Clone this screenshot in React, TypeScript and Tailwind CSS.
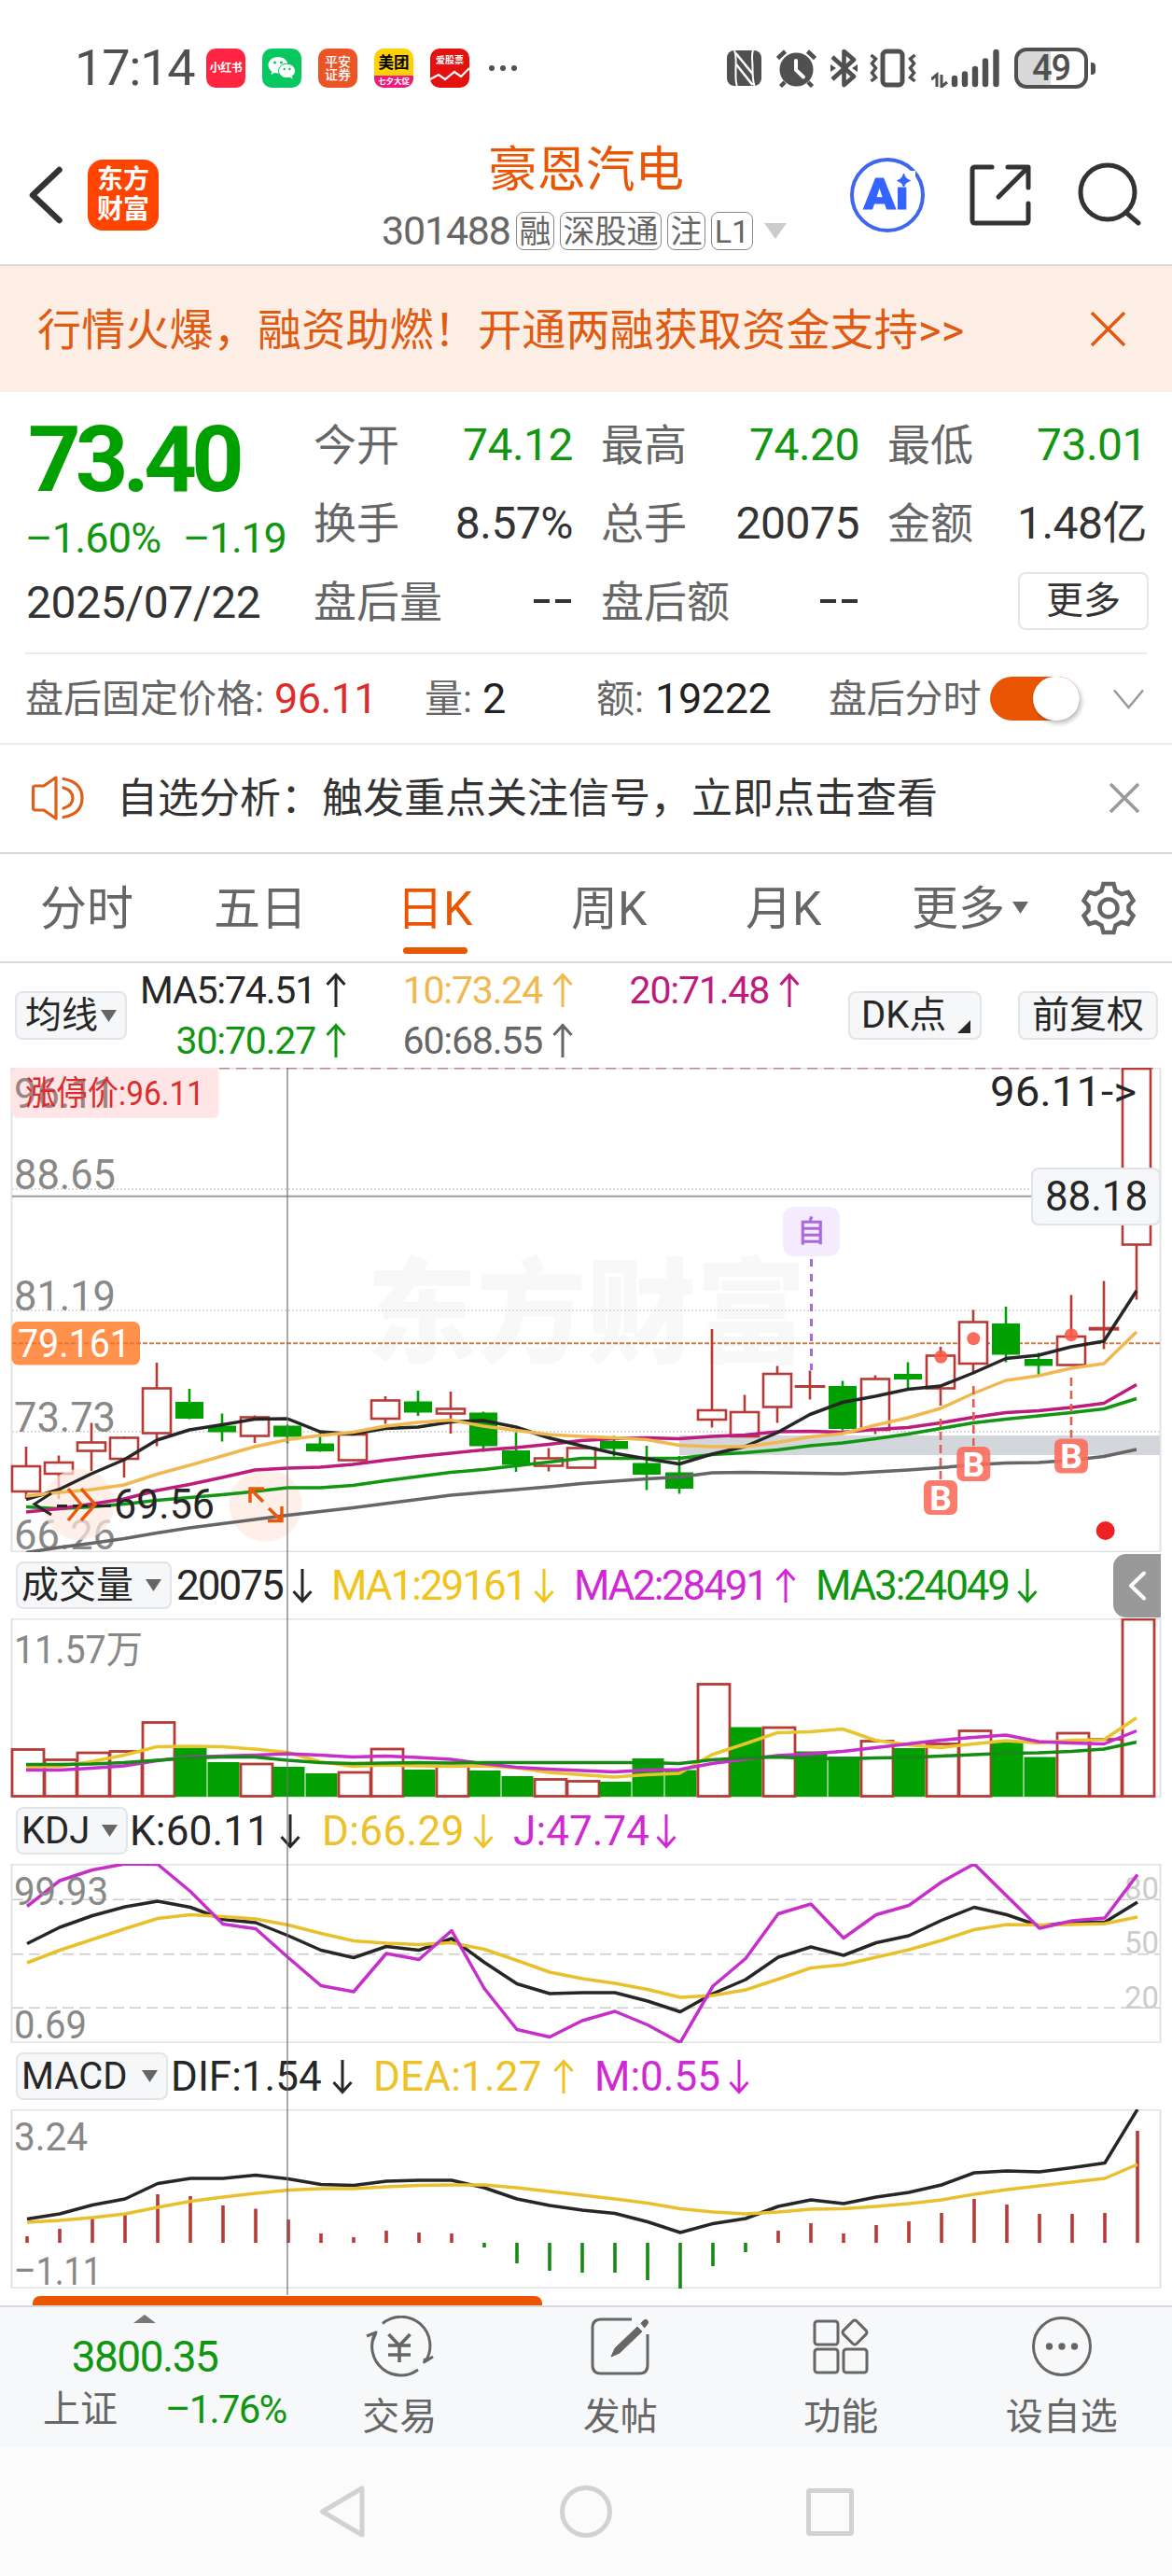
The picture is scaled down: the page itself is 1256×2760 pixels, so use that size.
import type { ReactNode } from "react";

const RED = "#b73a36";
const GREEN = "#00a000";
const STEP = 35;
const FIRST_X = 28;

type Candle = [up: boolean, high: number, top: number, bottom: number, low: number];

const CANDLES: Candle[] = [
  [true, 406, 427, 454, 462],
  [true, 415.5, 423, 435, 462],
  [true, 380.5, 401.5, 410.5, 432],
  [true, 395, 396.5, 419, 439],
  [true, 316, 343.5, 391.5, 405.5],
  [false, 344, 358, 376, 376.5],
  [false, 370.5, 383.5, 390.5, 400.5],
  [true, 372.5, 374.5, 394.5, 402],
  [false, 382.5, 383.5, 395.5, 402.5],
  [false, 391, 402.5, 411, 411.5],
  [true, 391, 393, 420.5, 420.5],
  [true, 352, 356.5, 376, 381.5],
  [false, 346, 357.5, 369.5, 373],
  [true, 347, 365.5, 370.5, 392],
  [false, 368.5, 369.5, 405.5, 411.5],
  [false, 390.5, 410, 425.5, 433],
  [true, 407.5, 418.5, 426.5, 432.5],
  [true, 407.5, 407.5, 428.5, 428.5],
  [false, 394.5, 400, 408.5, 416.5],
  [false, 405, 423.5, 436, 452.5],
  [false, 416, 433.5, 451, 456.5],
  [true, 280, 367, 377, 385.5],
  [true, 350.5, 369, 395, 395],
  [true, 319.5, 328, 363.5, 380.5],
  [true, 324.5, 341.3, 341.7, 355.5],
  [false, 335.5, 341, 387, 388.5],
  [true, 329.5, 333.5, 388, 392.5],
  [false, 315.5, 328, 334, 343.5],
  [true, 299, 308.5, 343.5, 362],
  [true, 259.5, 272.5, 317, 326.5],
  [false, 256, 274, 307.5, 315.5],
  [false, 305.5, 312, 319.5, 329],
  [true, 243.5, 288, 318.5, 318.5],
  [true, 228.5, 279, 280.3, 301.5],
  [true, 1, 1, 189.5, 248.5],
];

const MA5 = [462.5, 452, 435, 420, 399, 388, 382.5, 376.5, 376, 390, 392.5, 386.5, 385, 379.5, 378, 385, 396.5, 405, 413, 419, 424.5, 414, 406, 391, 371.5, 358.5, 352, 344.5, 341, 327, 311.5, 308, 299, 293, 239];
const MA10 = [459, 455, 452, 447, 435.5, 426, 416, 406, 398.5, 394, 390.5, 384, 380, 377.5, 384, 388.5, 393, 395, 396.5, 398.5, 404.5, 406, 406, 401.5, 395.5, 392, 383, 375, 365, 349, 335, 330, 322, 317, 283];
const MA20 = [476, 472.5, 467.5, 462, 453, 446.5, 439, 431, 429, 428, 425, 420.5, 416.5, 413, 409.5, 407, 403.5, 399.5, 397.5, 396.5, 397.5, 395, 393.5, 390, 389.5, 390.5, 387.5, 385.5, 380.5, 374.5, 369.5, 367.5, 364, 359.5, 339.5];
const MA30 = [470.5, 472.5, 470.5, 467.5, 463.5, 460.5, 457.5, 454, 450, 450, 447.5, 442.5, 438, 433.5, 430.5, 426.5, 422.5, 418.5, 418.5, 418.5, 418.5, 414.5, 412.5, 409.5, 405, 402, 397.5, 392.5, 386.5, 380.5, 376.5, 373, 369.5, 365.5, 354.5];
const MA60 = [519.5, 514, 509.5, 504.5, 498.5, 493, 488.5, 484, 479.5, 475.5, 471.5, 467, 462.5, 458, 455, 452, 449, 445.5, 443, 440.5, 438.5, 434, 433.5, 434, 434.5, 435, 433, 431, 428.5, 425.5, 423.5, 423, 420.5, 416.5, 409];

const VOLUME = [140.5, 151.5, 144, 142.5, 111.5, 139, 154, 156, 159, 166, 165, 140, 162, 158.5, 163, 169, 172.5, 174.5, 175, 150, 162.5, 70.5, 116.5, 117, 142.5, 148, 131.5, 139, 134.5, 120.5, 132.5, 148.5, 123, 129.5, 1];
// Volume colour follows the close-to-close move, so it can differ from the candle
const VOLUME_DOWN = [5, 6, 8, 9, 12, 14, 15, 18, 19, 20, 22, 24, 25, 27, 30, 31];
const VOL_MA1 = [159.5, 158.5, 153.5, 146.5, 137.5, 137, 137.5, 140, 143.5, 153.5, 158.5, 157, 158, 158.5, 158, 160, 165, 167.5, 170, 167.5, 166, 146, 134.5, 122.5, 121.5, 118.5, 130.5, 135.5, 138.5, 134.5, 131, 133.5, 130.5, 130, 106.5];
const VOL_MA2 = [162.5, 162.5, 160.5, 158, 152.5, 148.5, 147.5, 146.5, 145, 146.5, 148.5, 147.5, 149, 151, 155.5, 159.5, 161.5, 163, 164.5, 162.5, 162, 155.5, 151, 147, 145, 142.5, 138.5, 134.5, 130.5, 127.5, 125, 132, 133.5, 134.5, 120.5];
const VOL_MA3 = [156.5, 156.5, 156, 154.5, 152, 149.5, 148.5, 148.5, 152, 154.5, 155.5, 155, 154.5, 155, 154.5, 154.5, 154.5, 154.5, 154.5, 154.5, 155.5, 151.5, 149.5, 148.5, 150, 150.5, 149.5, 149, 147.5, 146, 144.5, 144, 142.5, 140, 132.5];

const KDJ_K = [85.5, 68, 55.5, 46, 40, 46.5, 59.5, 63, 77, 92.5, 100.5, 88.5, 92.5, 80, 105.5, 128.5, 139, 138, 138, 147, 158.5, 139, 124, 100, 89, 98, 84.5, 77, 60.5, 46.5, 54.5, 66.5, 62.5, 62.5, 41];
const KDJ_D = [106, 92.5, 81, 69.5, 58.5, 54.5, 56.5, 59, 65.5, 74.5, 82.5, 85, 86.5, 84.5, 91.5, 103.5, 116, 123, 128, 134.5, 143, 141, 135, 123.5, 111.5, 108, 100, 92, 82, 70.5, 65, 65.5, 65, 64, 57];
const KDJ_J = [45.5, 18, 6.5, 0, 0.5, 29.5, 64.5, 69.5, 100.5, 130.5, 137, 96, 102.5, 71.5, 133.5, 177.5, 185.5, 168, 158, 172.5, 191.5, 131, 101.5, 53.5, 43, 79.5, 54.5, 44.5, 19.5, 0, 34.5, 69, 61, 58, 11.5];

const DIF = [117.5, 112, 102.5, 96, 79.5, 74, 74, 70.5, 74.5, 80.5, 81.5, 77, 76, 76, 84, 96, 103, 108, 111.5, 120.5, 132, 122.5, 117, 104, 97, 101, 94, 89, 81, 68, 66, 67, 62.5, 57.5, 0];
const DEA = [121, 119, 116, 112, 105, 98.5, 94, 90, 86.5, 85, 85, 83, 81.5, 81, 81, 84, 88, 92, 96, 100.5, 106.5, 110, 112, 110, 107, 106.5, 104, 101, 97, 91, 86, 82, 78, 74, 59];
const MACD_BAR = [136, 128, 117, 111, 91, 93, 103, 106.5, 118, 133, 137, 130, 132, 133, 148, 165, 173, 175, 175, 183, 192, 168, 153, 130, 122, 133, 124, 120, 111, 96, 102, 112, 112, 111, 23];
const MACD_ZERO = 143;

const SVG_FONT = "Roboto, 'Noto Sans CJK SC', sans-serif";

function Line({ ys, color, dx = 0 }: { ys: number[]; color: string; dx?: number }) {
  const points = ys.map((y, i) => `${FIRST_X + dx + i * STEP},${y}`).join(" ");
  return <polyline points={points} fill="none" stroke={color} strokeWidth={3.5} strokeLinejoin="round" />;
}

type LabelProps = { x: number; y: number; w: number; children: string; size?: number; fill?: string };

function Label({ x, y, w, children, size = 44, fill = "#888888" }: LabelProps) {
  return (
    <text x={x} y={y} textLength={w} lengthAdjust="spacingAndGlyphs" fontSize={size} fill={fill} fontFamily={SVG_FONT}>
      {children}
    </text>
  );
}

function Frame({ height }: { height: number }) {
  return <rect x={12.5} y={0.5} width={1231} height={height - 1} fill="none" stroke="#e2e2e2" strokeWidth={2} />;
}

function Arrow({ dir, className = "" }: { dir: "up" | "down"; className?: string }) {
  return (
    <svg viewBox="0 0 22 38" className={`w-[22px] h-[38px] shrink-0 ${className}`} fill="none" stroke="currentColor" strokeWidth={3}>
      {dir === "up" ? <path d="M11 37V3M1.5 13L11 2.5L20.5 13" /> : <path d="M11 1V35M1.5 25L11 35.5L20.5 25" />}
    </svg>
  );
}

function Caret({ className = "" }: { className?: string }) {
  return (
    <svg viewBox="0 0 17 13" className={`w-[17px] h-[13px] shrink-0 ${className}`} fill="currentColor">
      <path d="M0 0H17L8.5 13Z" />
    </svg>
  );
}

function StatusBar() {
  return (
    <div className="flex items-center h-[146px] pl-[80px] text-[#505050]">
      <span className="w-[141px] text-[54px] tracking-[-1.2px]">17:14</span>
      <div className="flex gap-[18px] text-white font-bold">
        <div className="w-[42px] h-[42px] rounded-[10px] bg-[#ff2442] flex items-center justify-center text-[12px] tracking-[-0.5px]">小红书</div>
        <div className="w-[42px] h-[42px] rounded-[10px] bg-[#07c860] flex items-center justify-center">
          <svg viewBox="0 0 42 42" className="w-[42px] h-[42px]">
            <path d="M17 9c-6 0-10.500 4-10.500 8.800 0 2.800 1.500 5.200 3.900 6.800l-1 3.300 3.800-2c1.200.3 2.500.5 3.800.5 6 0 10.500-3.900 10.500-8.600C27.500 13 23 9 17 9z" fill="#fff" />
            <ellipse cx="26.500" cy="24" rx="9.500" ry="8.200" fill="#07c860" />
            <path d="M26.500 16.700c-4.800 0-8.500 3.200-8.500 7.200s3.700 7.200 8.500 7.200c1 0 2-.1 2.900-.4l3.200 1.700-.8-2.800c2-1.300 3.300-3.400 3.300-5.700 0-4-3.800-7.200-8.600-7.200z" fill="#fff" />
            <circle cx="13.500" cy="15" r="1.500" fill="#07c860" />
            <circle cx="20.500" cy="15" r="1.500" fill="#07c860" />
            <circle cx="23.700" cy="22" r="1.200" fill="#07c860" />
            <circle cx="29.400" cy="22" r="1.200" fill="#07c860" />
          </svg>
        </div>
        <div className="w-[42px] h-[42px] rounded-[10px] bg-[#ec5428] flex flex-col items-center justify-center font-medium text-[14px] leading-[14px]">
          <span>平安</span>
          <span>证券</span>
        </div>
        <div className="w-[42px] h-[42px] rounded-[10px] overflow-hidden bg-[#ffd100] flex flex-col items-center">
          <span className="h-[29px] pt-[8px] text-[16.500px] text-black">美团</span>
          <span className="w-full h-[13px] bg-[#ee1a7d] text-center text-[8.500px] leading-[12px]">七夕大促</span>
        </div>
        <div className="w-[42px] h-[42px] rounded-[10px] overflow-hidden bg-[#e3120f] flex flex-col items-center">
          <span className="pt-[8px] text-[10px]">爱股票</span>
          <svg viewBox="0 0 42 18" className="w-[42px] h-[18px]" fill="none" stroke="#fff" strokeWidth={2.200}>
            <path d="M0 15L9 10L16 15L26 7L33 12L42 3" />
          </svg>
        </div>
      </div>
      <div className="flex gap-[6px] ml-[21px]">
        <i className="w-[6px] h-[6px] rounded-full bg-[#505050]" />
        <i className="w-[6px] h-[6px] rounded-full bg-[#505050]" />
        <i className="w-[6px] h-[6px] rounded-full bg-[#505050]" />
      </div>

      <svg viewBox="0 0 37 38" className="ml-[225px] w-[37px] h-[38px]">
        <rect width="37" height="38" rx="8" fill="currentColor" />
        <path d="M8 0C10.500 5 9.500 12 9.500 22C9.500 30 9 34 11 38M28 0C26 5 27.500 10 27.500 18C27.500 28 28 34 29.500 38" stroke="#fff" strokeWidth={2} fill="none" />
        <path d="M9.500 3L27.500 25M10 15L27.500 37" stroke="#fff" strokeWidth={2.600} fill="none" />
      </svg>
      <svg viewBox="0 0 43 41" className="ml-[16px] w-[43px] h-[41px]">
        <circle cx="21.500" cy="21.500" r="18" fill="currentColor" />
        <path d="M1.500 9.500L9.500 2M41.500 9.500L33.500 2M9 35L4.500 39.500M34 35L38.500 39.500" stroke="currentColor" strokeWidth={4.500} />
        <path d="M21 12V22L29 29.500" stroke="#fff" strokeWidth={4} fill="none" strokeLinecap="round" />
      </svg>
      <svg viewBox="0 0 29 42" className="ml-[15px] w-[29px] h-[42px]" fill="none" stroke="currentColor" strokeWidth={4.600}>
        <path d="M2 9L25 30L14.500 39V3L25 12L2 33" strokeLinejoin="round" />
        <path d="M0 17L6 21L0 25ZM29 17L23 21L29 25Z" fill="currentColor" stroke="none" />
      </svg>
      <svg viewBox="0 0 50 42" className="ml-[13px] w-[50px] h-[42px]" fill="none" stroke="currentColor">
        <rect x="14" y="3" width="21" height="36" rx="4" strokeWidth={5} />
        <path d="M1.500 7L6.500 11L2.500 16L6.500 21L2.500 26L6.500 31L1.500 35M48.500 7L43.500 11L47.500 16L43.500 21L47.500 26L43.500 31L48.500 35" strokeWidth={3.500} />
      </svg>
      <svg viewBox="0 0 73 42" className="ml-[16px] w-[73px] h-[42px]" stroke="currentColor" strokeLinecap="round">
        <path d="M0 33L6 28V41M17 36L11 41V28" strokeWidth={3} fill="none" strokeLinecap="butt" />
        <path d="M25 32V38M36 27.500V38M47 22V38M58 13.500V38M69.500 4V38" strokeWidth={6.400} />
      </svg>
      <div className="ml-[16px] w-[79px] h-[44px] rounded-[13px] border-[4px] border-[#505050] bg-linear-to-r from-[#d8d8d8] from-50% to-white to-50% flex items-center justify-center text-[38px] font-medium tracking-[-1px]">
        49
      </div>
      <i className="ml-[3px] w-[5px] h-[13px] rounded-r-[4px] bg-[#505050]" />
    </div>
  );
}

function Tag({ className, children }: { className: string; children: string }) {
  return (
    <span className={`h-[41px] flex items-center justify-center rounded-[8px] border-[1.500px] border-[#888888] text-[34px] whitespace-nowrap ${className}`}>
      {children}
    </span>
  );
}

function Header() {
  return (
    <div className="flex h-[139px] border-b-2 border-[#d9d9d9]">
      <svg viewBox="0 0 36 62" className="mt-[32px] ml-[31px] w-[36px] h-[62px]" fill="none" stroke="#333333" strokeWidth={6.500} strokeLinejoin="round" strokeLinecap="round">
        <path d="M32.500 4L4 31L32.500 58" />
      </svg>
      <div className="mt-[25px] ml-[27px] w-[76px] h-[76px] rounded-[16px] bg-[#ff4400] flex flex-col items-center justify-center text-white font-bold text-[28px] leading-[32px]">
        <span>东方</span>
        <span>财富</span>
      </div>
      <div className="ml-[239px] w-[439px] flex flex-col">
        <h1 className="mt-[10px] h-[52px] flex items-center pl-[114px] text-[52.500px] text-[#ea5504]">豪恩汽电</h1>
        <div className="mt-[18px] flex items-center text-[#666666]">
          <span className="w-[144px] text-[43px] tracking-[-1.200px]">301488</span>
          <Tag className="w-[41px]">融</Tag>
          <Tag className="ml-[6px] w-[109px]">深股通</Tag>
          <Tag className="ml-[6px] w-[41px]">注</Tag>
          <Tag className="ml-[6px] w-[45px]">L1</Tag>
          <svg viewBox="0 0 24 17" className="ml-[12px] w-[24px] h-[17px]">
            <path d="M0 0H24L12 17Z" fill="#cccccc" />
          </svg>
        </div>
      </div>
      <svg viewBox="0 0 84 84" className="mt-[21px] ml-[63px] w-[84px] h-[84px]">
        <circle cx="40" cy="42" r="38" fill="none" stroke="#3f66ee" strokeWidth={4} />
        <text x="14.500" y="57" fontSize="46" fontWeight="900" fill="#3563ff" stroke="#3563ff" fontFamily="Roboto, sans-serif" textLength="48" lengthAdjust="spacingAndGlyphs">
          Ai
        </text>
        <rect x="48" y="16" width="22" height="17.500" fill="#fff" />
        <path d="M57.500 19Q59 25 64.500 26.500Q59 28 57.500 33Q56 28 50.500 26.500Q56 25 57.500 19Z" fill="#3563ff" stroke="#3563ff" />
      </svg>
      <svg viewBox="0 0 66 66" className="mt-[30px] ml-[44px] w-[66px] h-[66px]" fill="none" stroke="#333333" strokeWidth={5} strokeLinecap="round" strokeLinejoin="round">
        <path d="M24 3H6Q3 3 3 6V60Q3 63 6 63H60Q63 63 63 60V42M41 3H63V25M62 4L31 35" />
      </svg>
      <svg viewBox="0 0 70 70" className="mt-[28px] ml-[49px] w-[70px] h-[70px]" fill="none" stroke="#333333" strokeWidth={5} strokeLinecap="round">
        <circle cx="33" cy="32" r="29" />
        <path d="M53 54L66 65" />
      </svg>
    </div>
  );
}

function Banner() {
  return (
    <div className="h-[135px] flex items-center bg-[#fceee5] text-[#e05a12]">
      <span className="ml-[40px] pt-[2px] text-[47px] tracking-[0.200px] whitespace-nowrap">行情火爆，融资助燃！开通两融获取资金支持&gt;&gt;</span>
      <svg viewBox="0 0 37 37" className="ml-auto mr-[50px] w-[37px] h-[37px]" stroke="currentColor" strokeWidth={3.500}>
        <path d="M1 1L36 36M36 1L1 36" />
      </svg>
    </div>
  );
}

function Stat({ label, value, className = "text-[#333333]" }: { label: string; value?: string; className?: string }) {
  return (
    <div className="flex items-center justify-between">
      <span className="pt-[2px] text-[46px] text-[#666666]">{label}</span>
      {value && <span className={`pt-[1px] text-[48px] tracking-[-0.500px] ${className}`}>{value}</span>}
    </div>
  );
}

function Dashes() {
  return (
    <div className="flex gap-[6px] mr-[2px]">
      <i className="w-[17px] h-[4px] bg-[#333333]" />
      <i className="w-[17px] h-[4px] bg-[#333333]" />
    </div>
  );
}

function Quote() {
  return (
    <div className="pt-[14px] flex">
      <div className="w-[309px] ml-[27px] flex flex-col whitespace-nowrap">
        <span className="h-[114px] flex items-center pt-[3px] pl-[3px] text-[99px] font-bold text-[#00a000] tracking-[-6px]">73.40</span>
        <div className="h-[56px] flex items-center text-[45px] text-[#119611]">
          <span className="w-[169px] tracking-[-0.800px]">–1.60%</span>
          <span className="tracking-[-1.400px]">–1.19</span>
        </div>
        <span className="h-[82px] flex items-center pl-[1px] pt-[1px] text-[48px] tracking-[-0.400px] text-[#333333]">2025/07/22</span>
      </div>
      <div className="w-[893px] grid grid-cols-[278px_277px_278px] gap-x-[30px] grid-rows-[84px_84px_84px]">
        <Stat label="今开" value="74.12" className="text-[#119611]" />
        <Stat label="最高" value="74.20" className="text-[#119611]" />
        <Stat label="最低" value="73.01" className="text-[#119611]" />
        <Stat label="换手" value="8.57%" />
        <Stat label="总手" value="20075" />
        <Stat label="金额" value="1.48亿" />
        <div className="flex items-center justify-between">
          <Stat label="盘后量" />
          <Dashes />
        </div>
        <div className="flex items-center justify-between">
          <Stat label="盘后额" />
          <Dashes />
        </div>
        <div className="flex items-center justify-end">
          <span className="w-[140px] h-[62px] mr-[-2px] rounded-[8px] border-2 border-[#e4e6e8] flex items-center justify-center text-[40px] text-[#333333]">更多</span>
        </div>
      </div>
    </div>
  );
}

function AfterHours() {
  return (
    <div className="flex items-center h-[97px] pl-[27px] border-b-2 border-[#ececec] text-[41px] text-[#666666] whitespace-nowrap">
      <span className="w-[267px] pt-[2px]">盘后固定价格:</span>
      <span className="w-[161px] text-[45px] tracking-[-0.600px] text-[#dd2c2c]">96.11</span>
      <span className="w-[62px] pt-[2px]">量:</span>
      <span className="w-[122px] text-[45px] text-[#222222]">2</span>
      <span className="w-[63px] pt-[2px]">额:</span>
      <span className="w-[186px] text-[45px] tracking-[-0.400px] text-[#222222]">19222</span>
      <span className="pt-[2px] tracking-[-0.200px]">盘后分时</span>
      <div className="ml-[10px] w-[96px] h-[47px] rounded-full bg-[#ea5504] flex items-center justify-end">
        <i className="w-[50px] h-[47px] rounded-full bg-white shadow-[2px_3px_5px_rgba(0,0,0,0.25)]" />
      </div>
      <svg viewBox="0 0 33 22" className="ml-[36px] w-[33px] h-[22px]" fill="none" stroke="#999999" strokeWidth={2.500}>
        <path d="M1 1.500L16.500 20L32 1.500" />
      </svg>
    </div>
  );
}

function Notice() {
  return (
    <div className="flex items-center h-[118px] pl-[33px] border-b-2 border-[#d9d9d9]">
      <svg viewBox="0 0 58 48" className="w-[58px] h-[48px]" fill="none" stroke="#dd5f1a" strokeWidth={3.200} strokeLinejoin="round" strokeLinecap="round">
        <path d="M27 2L14 11H5Q2.500 11 2.500 13.500V34.500Q2.500 37 5 37H14L27 46Z" />
        <path d="M35 13Q45 16 45 24Q45 32 35 35M35 3.500Q55 7 55 24Q55 41 35 44.500" />
      </svg>
      <span className="ml-[34px] pt-[2px] text-[44px] text-[#333333] whitespace-nowrap">自选分析：触发重点关注信号，立即点击查看</span>
      <svg viewBox="0 0 32 32" className="ml-auto mr-[35px] w-[32px] h-[32px]" stroke="#999999" strokeWidth={3.500}>
        <path d="M1 1L31 31M31 1L1 31" />
      </svg>
    </div>
  );
}

function Tabs() {
  return (
    <div className="flex items-center h-[117px] pl-[43px] border-b-2 border-[#d9d9d9] text-[50px] text-[#666666] whitespace-nowrap">
      <span className="pt-[2px] w-[186px]">分时</span>
      <span className="pt-[2px] w-[196px]">五日</span>
      <span className="pt-[2px] w-[187px] h-full relative flex items-center text-[#ea5504]">
        日K
        <i className="absolute left-[7px] bottom-[8px] w-[69px] h-[7px] rounded-full bg-[#ea5504]" />
      </span>
      <span className="pt-[2px] w-[187px]">周K</span>
      <span className="pt-[2px] w-[178px]">月K</span>
      <span className="pt-[2px]">更多</span>
      <Caret className="ml-[8px]" />
      <svg viewBox="0 0 58 58" className="ml-[57px] w-[58px] h-[58px]" fill="none" stroke="#666666" strokeWidth={4.500}>
        <path d="M23.500 3H34.500L36.500 10.500L43 14L50 12L55.500 21L50.500 26.500V31.500L55.500 37L50 46L43 44L36.500 47.500L34.500 55H23.500L21.500 47.500L15 44L8 46L2.500 37L7.500 31.500V26.500L2.500 21L8 12L15 14L21.500 10.500Z" />
        <circle cx="29" cy="29" r="9.500" />
      </svg>
    </div>
  );
}

function MaCell({ text, className }: { text: string; className: string }) {
  return (
    <div className={`flex items-center justify-end h-[54px] text-[41px] tracking-[-1.200px] ${className}`}>
      {text}
      <Arrow dir="up" className="ml-[11px]" />
    </div>
  );
}

const CHIP = "rounded-[8px] border-2 border-[#e1e4e8] bg-[#f6f7f9] flex items-center text-[#262626] whitespace-nowrap";

function MaRow() {
  return (
    <div className="flex items-center h-[112px] pl-[16px]">
      <div className={`${CHIP} w-[120px] h-[52px] pl-[9px] text-[39px]`}>
        均线
        <Caret className="ml-[3px] text-[#666666]" />
      </div>
      <div className="grid grid-cols-[235px_243px_243px]">
        <MaCell text="MA5:74.51" className="text-[#262626]" />
        <MaCell text="10:73.24" className="text-[#f0b84e]" />
        <MaCell text="20:71.48" className="text-[#be1b7d]" />
        <MaCell text="30:70.27" className="text-[#119611]" />
        <MaCell text="60:68.55" className="text-[#666666]" />
      </div>
      <div className={`${CHIP} ml-[52px] w-[143px] h-[52px] pl-[12px] text-[40px]`}>
        DK点
        <svg viewBox="0 0 14 14" className="ml-[12px] mt-[24px] w-[14px] h-[14px]">
          <path d="M14 0V14H0Z" fill="#262626" />
        </svg>
      </div>
      <div className={`${CHIP} ml-[39px] w-[150px] h-[52px] justify-center text-[40px]`}>前复权</div>
    </div>
  );
}

function BuyMark({ x, y, from }: { x: number; y: number; from: number }) {
  return (
    <g>
      <path d={`M${x} ${from}V${y}`} stroke="#e0604f" strokeWidth={2.600} strokeDasharray="9 5" />
      <rect x={x - 18} y={y + 1} width={36} height={37} rx={7} fill="#fb6d5c" fillOpacity={0.9} />
      <text x={x} y={y + 32.500} textAnchor="middle" fontSize={37} fontWeight={700} fill="#fff" fontFamily={SVG_FONT}>
        B
      </text>
    </g>
  );
}

function KLineChart() {
  return (
    <svg viewBox="0 0 1256 519" className="block w-[1256px] h-[519px]">
      <Frame height={519} />
      <text x={393} y={306} textLength={471} lengthAdjust="spacingAndGlyphs" fontSize={122} fontWeight={900} fill="#f8f8f8" fontFamily={SVG_FONT}>
        东方财富
      </text>
      <path d="M13 130H1243M13 260H1243M13 390H1243" stroke="#dddddd" strokeWidth={2} strokeDasharray="2 2" />
      <path d="M235 0.500H1243" stroke="#c08880" strokeWidth={2} strokeDasharray="11 7" />
      <rect x={728} y={394} width={515} height={21} fill="#d3d7dc" />
      <path d="M13 295.300H1243" stroke="#cf7a45" strokeWidth={2} strokeDasharray="5 2" />

      <Label x={15} y={130} w={109}>88.65</Label>
      <Label x={15} y={259.500} w={109}>81.19</Label>
      <Label x={15} y={389.500} w={109}>73.73</Label>
      <Label x={15} y={516} w={109}>66.26</Label>

      {CANDLES.map(([up, high, top, bottom, low], i) => {
        const x = FIRST_X + i * STEP;
        return up ? (
          <g key={i} stroke={RED} strokeWidth={2.600}>
            <path d={`M${x} ${high}V${top}M${x} ${bottom}V${low}`} />
            <rect x={x - 15} y={top} width={30} height={bottom - top} fill="#fff" />
          </g>
        ) : (
          <g key={i}>
            <path d={`M${x} ${high}V${low}`} stroke={GREEN} strokeWidth={2.600} />
            <rect x={x - 15} y={top} width={30} height={bottom - top} fill={GREEN} />
          </g>
        );
      })}

      <circle cx={84.500} cy={468} r={38} fill="#fdeadf" fillOpacity={0.7} />
      <circle cx={284.700} cy={468.700} r={39} fill="#fdeadf" fillOpacity={0.7} />

      <Line ys={MA60} color="#666666" />
      <Line ys={MA30} color="#119611" />
      <Line ys={MA20} color="#be1b7d" />
      <Line ys={MA5} color="#262626" />
      <Line ys={MA10} color="#f0b84e" />

      <path d="M13 137.700H1243" stroke="#9a9a9a" strokeWidth={2} />

      <path d="M55 456L37 467.500L55 479M61 469.500H72M78 469.500H94M101 469.500H119" fill="none" stroke="#262626" strokeWidth={3} />
      <path d="M73 451L87 468L73 485M87 451L102 468L87 485" fill="none" stroke="#e8590c" strokeWidth={3.500} />
      <path d="M282 465L268 451M268 466V451H283M288 472L302 485.500M302 470V485.500H287" fill="none" stroke="#e8590c" strokeWidth={3.500} />
      <Label x={122} y={483} w={108} fill="#262626">69.56</Label>

      <rect x={12.500} y={0} width={222} height={53.700} rx={6} fill="#ffe5e5" />
      <Label x={15} y={43} w={109} fill="#9c8484">96.11</Label>
      <Label x={27} y={39.500} w={192} size={36} fill="#dd2c2c">涨停价:96.11</Label>

      <rect x={12.500} y={272} width={137.500} height={46.500} rx={7} fill="#ff914d" />
      <path d="M13 295.300H150" stroke="#e8772f" strokeWidth={2} strokeDasharray="5 2" />
      <Label x={19} y={309.500} w={121} size={43} fill="#ffffff">79.161</Label>

      <Label x={1061} y={41} w={157} size={45} fill="#262626">96.11-&gt;</Label>
      <rect x={1106} y={108} width={137} height={60} rx={7} fill="#f6f7f9" stroke="#dfe2e6" strokeWidth={2} />
      <Label x={1120} y={152.700} w={110} size={45} fill="#262626">88.18</Label>

      <path d="M869.500 205V324" stroke="#a26bd8" strokeWidth={3} strokeDasharray="8 8" />
      <rect x={839} y={149} width={61} height={53} rx={12} fill="#f4ebfe" />
      <text x={869.500} y={186} textAnchor="middle" fontSize={31} fill="#a866e0" stroke="#a866e0" strokeWidth={0.600} fontFamily={SVG_FONT}>
        自
      </text>

      <g fill="#fb5b48" fillOpacity={0.9}>
        <circle cx={1008.400} cy={309.700} r={7} />
        <circle cx={1043.300} cy={290.300} r={7} />
        <circle cx={1148} cy={286.300} r={7} />
      </g>
      <BuyMark x={1008} y={441} from={376} />
      <BuyMark x={1043.300} y={405} from={341} />
      <BuyMark x={1148} y={396.500} from={332} />
      <circle cx={1184.700} cy={496} r={10} fill="#ee2222" />
    </svg>
  );
}

function VolumeChart() {
  return (
    <svg viewBox="0 0 1256 192" className="block w-[1256px] h-[192px]">
      <Frame height={192} />
      <Label x={15} y={48} w={138} size={42}>11.57万</Label>
      {VOLUME.map((top, i) => {
        const x = 12 + i * STEP;
        return VOLUME_DOWN.includes(i) ? (
          <rect key={i} x={x + 0.500} y={top} width={34} height={191 - top} fill={GREEN} />
        ) : (
          <rect key={i} x={x + 1} y={top} width={34} height={190.500 - top} fill="#fff" stroke={RED} strokeWidth={2.800} />
        );
      })}
      <Line ys={VOL_MA1} color="#e9c52c" />
      <Line ys={VOL_MA2} color="#c62fca" />
      <Line ys={VOL_MA3} color="#148c14" />
    </svg>
  );
}

function KdjChart() {
  return (
    <svg viewBox="0 0 1256 192" className="block w-[1256px] h-[192px]">
      <Frame height={192} />
      <path d="M13 38.300H1243M13 96.700H1243M13 154.300H1243" stroke="#cccccc" strokeWidth={1.500} strokeDasharray="12 6" />
      <Label x={1205} y={38} w={37} size={33} fill="#cccccc">80</Label>
      <Label x={1205} y={96} w={37} size={33} fill="#cccccc">50</Label>
      <Label x={1205} y={154.500} w={37} size={33} fill="#cccccc">20</Label>
      <Line ys={KDJ_K} color="#262626" dx={1} />
      <Line ys={KDJ_D} color="#e9c02c" dx={1} />
      <Line ys={KDJ_J} color="#c62fca" dx={1} />
      <Label x={15} y={43.500} w={101} size={42}>99.93</Label>
      <Label x={15} y={187} w={78} size={42}>0.69</Label>
    </svg>
  );
}

function MacdChart() {
  return (
    <svg viewBox="0 0 1256 192" className="block w-[1256px] h-[192px]">
      <Frame height={192} />
      <Line ys={DIF} color="#262626" dx={1} />
      {MACD_BAR.map((y, i) => (
        <path key={i} d={`M${FIRST_X + 1 + i * STEP} ${MACD_ZERO}V${y}`} stroke={y < MACD_ZERO ? RED : "#148c14"} strokeWidth={3.600} />
      ))}
      <Line ys={DEA} color="#e9c02c" dx={1} />
      <Label x={15} y={44} w={79} size={42}>3.24</Label>
      <Label x={15} y={188} w={94} size={42}>–1.11</Label>
    </svg>
  );
}

function IndicatorHead({ name, chip, children }: { name: string; chip: string; children: ReactNode }) {
  return (
    <div className="flex items-center h-[71px] pl-[17px]">
      <div className={`${CHIP} ${chip} h-[51px] justify-between pl-[4px] pr-[9px] text-[40px]`}>
        {name}
        <Caret className="text-[#666666]" />
      </div>
      {children}
    </div>
  );
}

function Reading({ text, dir, className }: { text: string; dir: "up" | "down"; className: string }) {
  return (
    <div className={`flex items-center justify-between shrink-0 text-[44px] whitespace-nowrap ${className}`}>
      {text}
      <Arrow dir={dir} />
    </div>
  );
}

function Charts() {
  return (
    <div className="relative h-[1326px]">
      <KLineChart />
      <IndicatorHead name="成交量" chip="w-[167px]">
        <Reading text="20075" dir="down" className="ml-[5px] w-[146px] tracking-[-2px] text-[#262626]" />
        <Reading text="MA1:29161" dir="down" className="ml-[20px] w-[239px] tracking-[-2px] text-[#f0c41c]" />
        <Reading text="MA2:28491" dir="up" className="ml-[21px] w-[238px] tracking-[-2.200px] text-[#cf29d3]" />
        <Reading text="MA3:24049" dir="down" className="ml-[21px] w-[238px] tracking-[-2.200px] text-[#119611]" />
        <div className="ml-auto mr-[12px] w-[51px] h-[68px] rounded-l-[14px] bg-[#999999] flex items-center justify-center">
          <svg viewBox="0 0 20 32" className="w-[20px] h-[32px]" fill="none" stroke="#fff" strokeWidth={4} strokeLinecap="round" strokeLinejoin="round">
            <path d="M17 2.500L3 16L17 29.500" />
          </svg>
        </div>
      </IndicatorHead>
      <VolumeChart />
      <IndicatorHead name="KDJ" chip="w-[120px]">
        <Reading text="K:60.11" dir="down" className="ml-[2px] w-[183px] tracking-[0.200px] text-[#262626]" />
        <Reading text="D:66.29" dir="down" className="ml-[23px] w-[184px] tracking-[0.400px] text-[#edc12a]" />
        <Reading text="J:47.74" dir="down" className="ml-[21px] w-[175px] tracking-[0.100px] text-[#cf29d3]" />
      </IndicatorHead>
      <KdjChart />
      <IndicatorHead name="MACD" chip="w-[163px]">
        <Reading text="DIF:1.54" dir="down" className="ml-[3px] w-[195px] text-[#262626]" />
        <Reading text="DEA:1.27" dir="up" className="ml-[22px] w-[215px] tracking-[0.200px] text-[#edc12a]" />
        <Reading text="M:0.55" dir="down" className="ml-[22px] w-[166px] text-[#cf29d3]" />
      </IndicatorHead>
      <MacdChart />
      <div className="ml-[35px] mt-[8px] w-[546px] h-[10px] rounded-t-[8px] bg-[#ea5504]" />
      {/* crosshair across every pane */}
      <i className="absolute left-[307px] top-0 w-[2px] h-[1315px] bg-[#707070]/60" />
    </div>
  );
}

function BarItem({ label, children }: { label: string; children: ReactNode }) {
  return (
    <div className="flex-1 flex flex-col items-center text-[40px] text-[#666666]">
      <svg viewBox="0 0 74 66" className="mt-[9px] w-[74px] h-[66px]" fill="none" stroke="#666666" strokeWidth={3} strokeLinejoin="round">
        {children}
      </svg>
      <span className="mt-[23px]">{label}</span>
    </div>
  );
}

function BottomBar() {
  return (
    <div className="flex h-[152px] border-t-2 border-[#d6dade] bg-[#f6f8fa]">
      <div className="w-[310px] flex flex-col items-center">
        <svg viewBox="0 0 24 9" className="mt-[8px] w-[24px] h-[9px]">
          <path d="M0 9L12 0L24 9Z" fill="#777777" />
        </svg>
        <span className="mt-[13px] text-[46px] tracking-[-1.500px] text-[#119611]">3800.35</span>
        <div className="mt-[13px] ml-[46px] self-start flex items-center text-[40px] whitespace-nowrap">
          <span className="w-[131px] text-[#666666]">上证</span>
          <span className="text-[42px] tracking-[-1.800px] text-[#119611]">–1.76%</span>
        </div>
      </div>
      <BarItem label="交易">
        <path d="M19 8.500A31 31 0 0 1 65 49L62.500 50.500M65 49L73 44M65 49L63.500 46M57 58A31 31 0 0 1 11 19M2 22L12 18L9 26" />
        <path d="M25.500 20L37 32L48.500 20M37 32V50M25 32H49M25 42H49" strokeWidth={3.600} />
      </BarItem>
      <BarItem label="发帖">
        <path d="M49 4H16Q7 4 7 13V53Q7 62 16 62H57Q66 62 66 53V20" />
        <path d="M27 44L31 35L55 12L60 17L36 40ZM59 8L62 5Q65 3 66.500 6Q67 8 64 11.500L62.500 13Z" fill="#666666" strokeWidth={1} />
      </BarItem>
      <BarItem label="功能">
        <rect x="9" y="6" width="25" height="25" rx="3" />
        <rect x="9" y="36" width="25" height="25" rx="3" />
        <rect x="40" y="36" width="25" height="25" rx="3" />
        <rect x="42" y="8" width="20" height="20" rx="3" transform="rotate(45 52 18)" />
      </BarItem>
      <BarItem label="设自选">
        <circle cx="37" cy="33" r="30.500" />
        <g fill="#666666" stroke="none">
          <circle cx="23.500" cy="33" r="3.700" />
          <circle cx="37" cy="33" r="3.700" />
          <circle cx="50.500" cy="33" r="3.700" />
        </g>
      </BarItem>
    </div>
  );
}

function SystemNav() {
  return (
    <div className="flex items-center justify-center gap-[208px] h-[138px] bg-[#fbfbfb]">
      <svg viewBox="0 0 50 56" className="w-[50px] h-[56px]" fill="none" stroke="#d2d2d2" strokeWidth={5} strokeLinejoin="round">
        <path d="M46 3V53L3.500 28Z" />
      </svg>
      <i className="w-[56px] h-[56px] rounded-full border-[5px] border-[#d2d2d2]" />
      <i className="w-[51px] h-[51px] rounded-[4px] border-[5px] border-[#d2d2d2]" />
    </div>
  );
}

export default function App() {
  return (
    <div className="w-[1256px] h-[2760px] overflow-hidden bg-white leading-none font-['Roboto','Noto_Sans_CJK_SC',sans-serif]">
      <StatusBar />
      <Header />
      <Banner />
      <Quote />
      <div className="h-[15px] ml-[27px] mr-[27px] border-b-2 border-[#ececec]" />
      <div className="h-[96px]">
        <AfterHours />
      </div>
      <Notice />
      <Tabs />
      <MaRow />
      <Charts />
      <BottomBar />
      <SystemNav />
    </div>
  );
}
